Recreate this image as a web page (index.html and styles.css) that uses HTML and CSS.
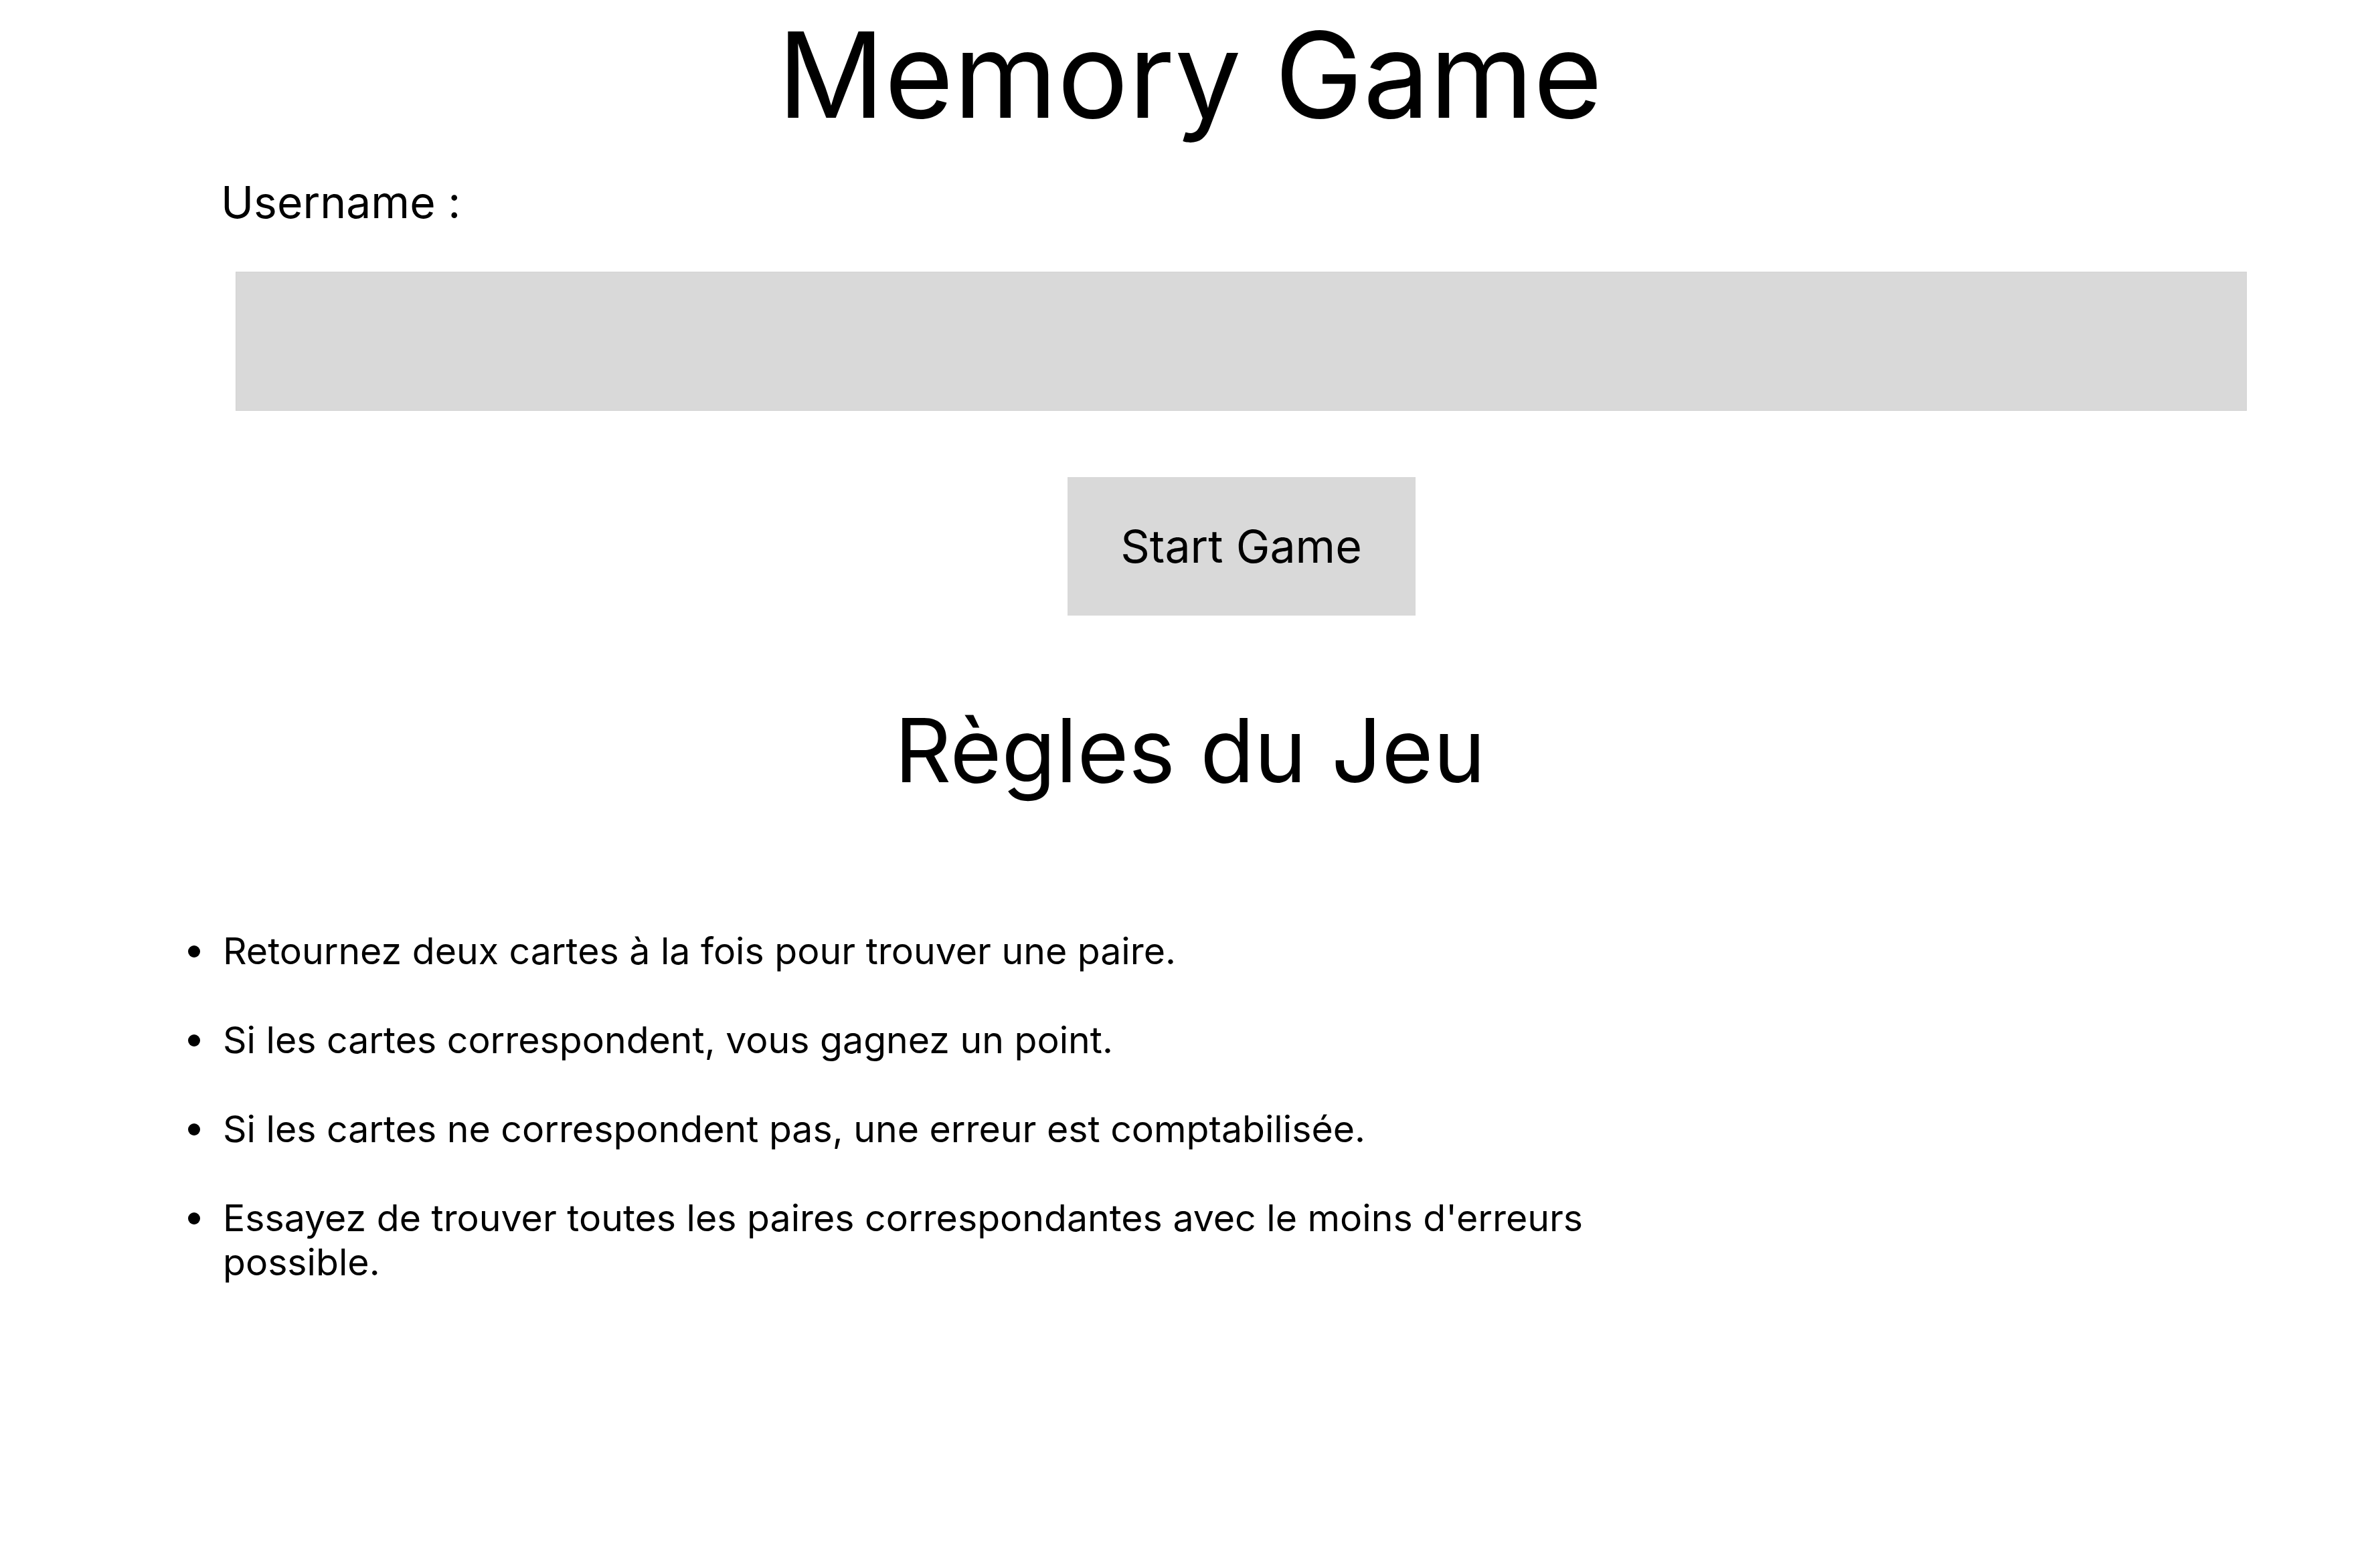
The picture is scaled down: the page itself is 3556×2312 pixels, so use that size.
FILE: index.html
```html
<!DOCTYPE html>
<html lang="fr">
<head>
<meta charset="utf-8">
<title>Memory Game</title>
<link rel="stylesheet" href="styles.css">
</head>
<body>
<main class="page">
  <h1 class="title">Memory Game</h1>
  <form class="login">
    <label class="login-label" for="username">Username :</label>
    <div class="login-controls">
      <input class="login-input" id="username" type="text">
      <button class="start-btn" type="button">Start Game</button>
    </div>
  </form>
  <section class="rules">
    <h2 class="rules-title">Règles du Jeu</h2>
    <ul class="rules-list">
      <li class="rule">Retournez deux cartes à la fois pour trouver une paire.</li>
      <li class="rule">Si les cartes correspondent, vous gagnez un point.</li>
      <li class="rule">Si les cartes ne correspondent pas, une erreur est comptabilisée.</li>
      <li class="rule">Essayez de trouver toutes les paires correspondantes avec le moins d'erreurs possible.</li>
    </ul>
  </section>
</main>
</body>
</html>
```
FILE: styles.css
```css
html, body {
  margin: 0;
  padding: 0;
  background: #ffffff;
  color: #000000;
  font-family: Inter, "Noto Sans", "Liberation Sans", sans-serif;
}

.page {
  display: flex;
  flex-direction: column;
}

.title {
  margin: 5px 0 0 0;
  font-size: 177px;
  font-weight: 400;
  line-height: 1.21;
  text-align: center;
}

.login {
  margin-top: 44px;
  padding: 0 199px 0 330px;
  display: flex;
  flex-direction: column;
}

.login-label {
  font-size: 66px;
  line-height: 1.21;
}

.login-controls {
  margin-top: 63px;
  margin-left: 22px;
  display: flex;
  flex-direction: column;
  align-items: center;
  gap: 99px;
}

.login-input {
  align-self: stretch;
  box-sizing: border-box;
  height: 208px;
  margin: 0;
  background: #d9d9d9;
  border: 1px solid #d2d2d2;
  font-family: inherit;
  font-size: 66px;
  padding: 0 20px;
  outline: none;
}

.start-btn {
  box-sizing: border-box;
  width: 520px;
  height: 207px;
  margin: 0;
  background: #d9d9d9;
  border: none;
  font-family: inherit;
  font-size: 68px;
  line-height: 1.21;
  color: #000000;
  padding: 0;
}

.rules {
  margin-top: 122px;
}

.rules-title {
  margin: 0;
  font-size: 132px;
  font-weight: 400;
  line-height: 1.21;
  text-align: center;
}

.rules-list {
  margin: 186px 0 0 0;
  padding: 0 0 0 333px;
  width: 2147px;
  font-size: 55.4px;
  line-height: 66px;
  list-style: none;
}

.rule {
  position: relative;
  margin-bottom: 67px;
}

.rule::before {
  content: "";
  position: absolute;
  left: -52px;
  top: 25px;
  width: 18px;
  height: 18px;
  border-radius: 50%;
  background: #000000;
}
```
